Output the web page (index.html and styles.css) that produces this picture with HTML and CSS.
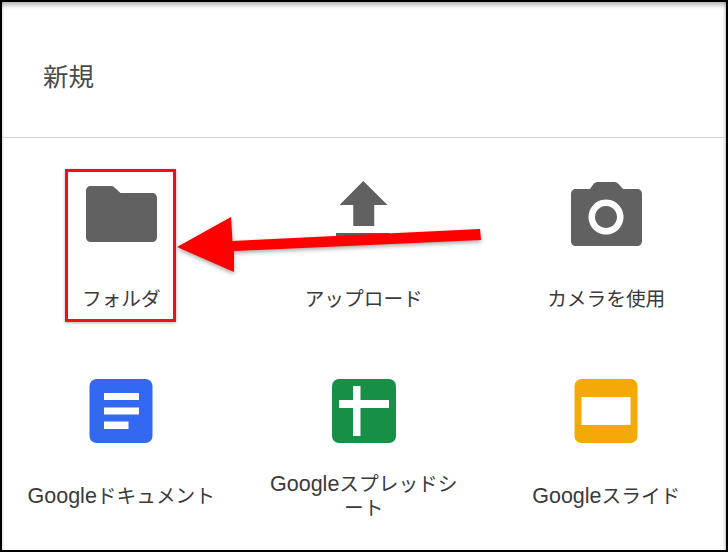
FILE: index.html
```html
<!DOCTYPE html>
<html lang="ja">
<head>
<meta charset="utf-8">
<title>新規</title>
<link rel="stylesheet" href="styles.css">
</head>
<body>
<main class="screen">
  <header class="header"><h1 class="title">新規</h1></header>
  <section class="grid">
    <div class="item">
      <svg class="icon" viewBox="0 0 80 80"><path fill="#616161" d="M10 11h20c1.500 0 2.500.5 3.500 1.500L39.500 18H71c3 0 5 2 5 5v39c0 3-2 5-5 5H10c-3 0-5-2-5-5V16c0-3 2-5 5-5z"/></svg>
      <div class="label">フォルダ</div>
    </div>
    <div class="item">
      <svg class="icon" viewBox="0 0 80 80"><path fill="#616161" d="M39.250 6L63.500 30H50.250V51H29.250V30H15.500zM12 58H66V65H12z"/></svg>
      <div class="label">アップロード</div>
    </div>
    <div class="item">
      <svg class="icon" viewBox="0 0 80 80"><path fill="#616161" fill-rule="evenodd" d="M10 14h14l3.500-5c1-1 2-2 4-2h17c2 0 3 1 4 2L57 14h14c3 0 5 2 5 5v47c0 3-2 5-5 5H10c-3 0-5-2-5-5V19c0-3 2-5 5-5zM40 24.500a17.500 17.500 0 1 0 .01 0zM40 31a11 11 0 1 1-.01 0z"/></svg>
      <div class="label">カメラを使用</div>
    </div>
    <div class="item">
      <svg class="icon" viewBox="0 0 80 80"><rect x="8.500" y="8" width="63" height="64" rx="7" fill="#3369f0"/><path fill="#fff" d="M23 22h35v7H23zM23 36.500h35v7H23zM23 50.500h24.500v7.500H23z"/></svg>
      <div class="label"><span class="label-text"><span class="latin">Google</span>ドキュメント</span></div>
    </div>
    <div class="item">
      <svg class="icon" viewBox="0 0 80 80"><rect x="8" y="8" width="64" height="64" rx="7" fill="#188f46"/><path fill="#fff" d="M29 15h7.500v14H65v8H36.500v28H29V37H15v-8h14z"/></svg>
      <div class="label"><span class="label-text"><span class="latin">Google</span>スプレッドシ<br>ート</span></div>
    </div>
    <div class="item">
      <svg class="icon" viewBox="0 0 80 80"><rect x="8.500" y="8" width="63" height="64" rx="7" fill="#f4a908"/><rect x="15.500" y="26" width="49" height="28" fill="#fff"/></svg>
      <div class="label"><span class="label-text"><span class="latin">Google</span>スライド</span></div>
    </div>
  </section>
  <div class="highlight"></div>
  <svg class="arrow" viewBox="0 0 728 552"><path fill="#ff0000" d="M177 247L231 217L232.500 241L480 229L481 240L234 251L234 272Z"/></svg>
</main>
</body>
</html>
```

FILE: styles.css
```css
html, body {
  margin: 0;
  padding: 0;
  background: #fff;
}

.screen {
  position: relative;
  width: 728px;
  height: 552px;
  overflow: hidden;
  background: #fff;
  font-family: "Liberation Sans", "Noto Sans CJK JP", sans-serif;
  box-shadow:
    inset 0 2px 0 #000,
    inset 2px 0 0 #000,
    inset -2px 0 0 #000,
    inset 0 -2px 0 #000,
    inset 0 7px 5px -2px rgba(0, 0, 0, 0.3),
    inset 4px 0 3px -2px rgba(0, 0, 0, 0.25),
    inset -5px 0 3px -2px rgba(0, 0, 0, 0.25);
}

.header {
  height: 125px;
  margin: 0 2px;
  padding: 12px 0 0 41px;
  display: flex;
  align-items: center;
  border-bottom: 1px solid #d2d2d2;
}

.title {
  margin: 0;
  font-size: 25.500px;
  font-weight: 400;
  color: #4a4a4a;
}

.grid {
  display: grid;
  grid-template-columns: repeat(3, 242.500px);
}

.item {
  display: flex;
  flex-direction: column;
  align-items: center;
  gap: 20px;
  padding: 37px 0 11px;
}

.icon {
  display: block;
  width: 80px;
  height: 80px;
}

.label {
  width: 220px;
  height: 48px;
  display: flex;
  align-items: center;
  justify-content: center;
  text-align: center;
  font-size: 19.700px;
  line-height: 24px;
  color: #3a3a3a;
}

.label-text {
  padding-top: 2px;
}

.latin {
  font-size: 21.500px;
}

.highlight {
  position: absolute;
  left: 65px;
  top: 169px;
  width: 111px;
  height: 153px;
  box-sizing: border-box;
  border: 3px solid #f40f14;
  box-shadow: 0 1px 3px rgba(0, 0, 0, 0.3);
}

.arrow {
  position: absolute;
  left: 0;
  top: 0;
  width: 728px;
  height: 552px;
  filter: drop-shadow(0 2px 2px rgba(0, 0, 0, 0.35));
}
```
